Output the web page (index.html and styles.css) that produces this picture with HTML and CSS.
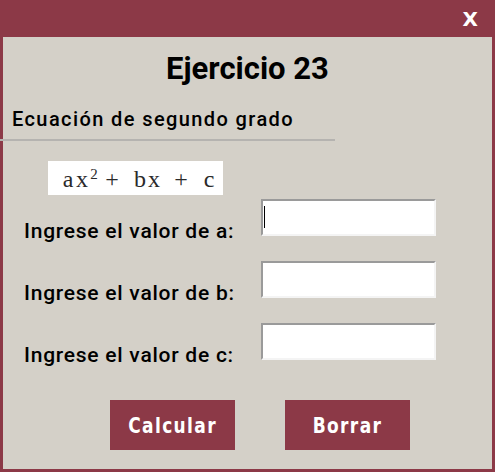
FILE: index.html
```html
<!DOCTYPE html>
<html lang="es">
<head>
<meta charset="utf-8">
<title>Ejercicio 23</title>
<link rel="stylesheet" href="styles.css">
</head>
<body>
<div class="window">
  <div class="titlebar"><span class="close">X</span></div>
  <div class="content">
    <h1 class="title">Ejercicio 23</h1>
    <div class="subtitle">Ecuación de segundo grado</div>
    <div class="rule"></div>
    <div class="formula"><span class="g">a</span><span class="g">x</span><span class="g sup">2</span><span class="g">+</span><span class="g">b</span><span class="g">x</span><span class="g">+</span><span class="g">c</span></div>
    <div class="form">
      <div class="row">
        <label class="label">Ingrese el valor de a:</label>
        <div class="field"><span class="caret"></span></div>
      </div>
      <div class="row">
        <label class="label">Ingrese el valor de b:</label>
        <div class="field"></div>
      </div>
      <div class="row">
        <label class="label">Ingrese el valor de c:</label>
        <div class="field"></div>
      </div>
    </div>
    <div class="buttons">
      <div class="btn"><span class="btn-text">Calcular</span></div>
      <div class="btn"><span class="btn-text">Borrar</span></div>
    </div>
  </div>
</div>
</body>
</html>
```
FILE: styles.css
```css
html, body {
  margin: 0;
  padding: 0;
}
body {
  width: 495px;
  height: 472px;
  overflow: hidden;
  font-family: Roboto, "Liberation Sans", sans-serif;
}
.window {
  width: 495px;
  height: 472px;
  background: #8c3947;
  display: flex;
  flex-direction: column;
  box-sizing: border-box;
  padding: 0 3px 3px 3px;
}
.titlebar {
  height: 37px;
  display: flex;
  justify-content: flex-end;
  align-items: center;
  padding-right: 14px;
  box-sizing: border-box;
}
.close {
  color: #fff;
  font-family: "DejaVu Sans", sans-serif;
  font-weight: bold;
  font-size: 20px;
  line-height: 1;
}
.content {
  flex: 1;
  background: #d4d0c8;
  display: flex;
  flex-direction: column;
}
.title {
  margin: 0;
  padding-top: 14px;
  text-align: center;
  font-size: 31px;
  font-weight: bold;
  line-height: 36px;
  color: #000;
}
.subtitle {
  margin-top: 20px;
  padding-left: 9px;
  font-size: 20px;
  font-weight: 500;
  letter-spacing: 1.4px;
  line-height: 24px;
  color: #000;
}
.rule {
  margin-top: 8px;
  margin-left: -3px;
  width: 335px;
  height: 2px;
  background: #b5b3b0;
}
.formula {
  margin-top: 20px;
  margin-left: 45px;
  width: 175px;
  height: 34px;
  background: #fff;
  box-sizing: border-box;
  padding-left: 13px;
  display: flex;
  align-items: center;
  font-family: "Liberation Serif", serif;
  font-size: 24px;
  line-height: 34px;
  color: #2a2a2a;
}
.g {
  width: 14px;
  text-align: center;
  padding-top: 1px;
}
.g:nth-child(3) { margin-left: -1px; width: 12px; }
.g:nth-child(4) { margin-left: 5px; }
.g:nth-child(5) { margin-left: 14px; }
.g:nth-child(6) { margin-left: 0; }
.g:nth-child(7) { margin-left: 13px; }
.g:nth-child(8) { margin-left: 14px; }
.g.sup {
  font-size: 15px;
  line-height: 15px;
  align-self: flex-start;
  padding-top: 6px;
}
.form {
  display: flex;
  flex-direction: column;
  gap: 25px;
  margin-top: 4px;
}
.row {
  display: flex;
  align-items: flex-end;
  height: 37px;
}
.label {
  width: 258px;
  padding-left: 21px;
  box-sizing: border-box;
  font-size: 21px;
  font-weight: 500;
  letter-spacing: 0.75px;
  line-height: 24px;
  color: #000;
  margin-bottom: -7px;
}
.field {
  position: relative;
  width: 175px;
  height: 37px;
  box-sizing: border-box;
  background: #fff;
  border-style: solid;
  border-width: 2px;
  border-color: #9a9a9a #f4f4f4 #f4f4f4 #9a9a9a;
}
.caret {
  position: absolute;
  left: 1px;
  top: 5px;
  width: 1px;
  height: 22px;
  background: #000;
}
.buttons {
  display: flex;
  gap: 50px;
  margin-top: 40px;
  padding-left: 107px;
}
.btn {
  width: 125px;
  height: 50px;
  background: #8c3947;
  color: #fff;
  display: flex;
  align-items: center;
  justify-content: center;
}
.btn-text {
  display: inline-block;
  font-family: "DejaVu Sans Condensed", "DejaVu Sans", sans-serif;
  font-weight: bold;
  font-size: 22px;
  letter-spacing: 1.6px;
  transform: scaleX(0.86);
}
```
